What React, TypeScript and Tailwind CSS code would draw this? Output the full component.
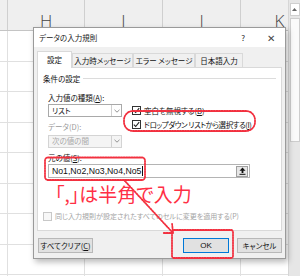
import React from "react";

const jp = "font-['Noto_Sans_CJK_JP',sans-serif] [font-feature-settings:'palt']";

const cols = ["H", "I", "J", "K"];
const rows = [0, 1, 2, 3, 4, 5, 6, 7, 8];

function Check({ on, disabled }: { on?: boolean; disabled?: boolean }) {
  return (
    <span
      className={`flex h-[9px] w-[9px] shrink-0 items-center justify-center border ${
        disabled ? "border-[#c8c8c8] bg-[#f7f7f7]" : "border-[#333] bg-white"
      }`}
    >
      {on && (
        <svg width="7" height="7" viewBox="0 0 7 7">
          <path d="M0.8 3.6 L2.7 5.5 L6.2 1.2" fill="none" stroke="#222" strokeWidth="1.1" />
        </svg>
      )}
    </span>
  );
}

function Select({ value, disabled }: { value: string; disabled?: boolean }) {
  return (
    <div
      className={`flex h-[13px] w-[74px] border ${
        disabled ? "border-[#d4d4d4] bg-[#f4f4f4] text-[#a8a8a8]" : "border-[#a9a9a9] bg-white text-[#111]"
      }`}
    >
      <span className="flex flex-1 items-center pl-[3px] text-[7.5px] leading-none">{value}</span>
      <span className="flex w-[10px] items-center justify-center border-l border-[#d0d0d0]">
        <svg width="6" height="4" viewBox="0 0 6 4">
          <path d="M0.5 0.8 L3 3.2 L5.5 0.8" fill="none" stroke="#888" strokeWidth="0.9" />
        </svg>
      </span>
    </div>
  );
}

function Tab({ label, w, active }: { label: string; w: string; active?: boolean }) {
  return (
    <div
      className={`${w} flex items-center justify-center border border-[#d9d9d9] text-[7.5px] leading-none text-[#111] ${
        active ? "relative z-10 -mb-px h-[17px] border-b-0 bg-white" : "h-[14px] border-b-0 bg-[#f0f0f0]"
      }`}
    >
      {label}
    </div>
  );
}

function Dialog() {
  return (
    <div
      className={`${jp} absolute left-[33px] top-[27px] flex h-[232px] w-[253px] flex-col border border-[#9a9a9a] bg-[#f0f0f0] shadow-[2px_3px_6px_rgba(0,0,0,0.28)]`}
    >
      {/* title bar */}
      <div className="flex h-[19px] shrink-0 items-center bg-white pl-[5px] pr-[10px] text-[7.5px] text-[#222]">
        <span>データの入力規則</span>
        <span className="ml-auto mr-[22px] text-[8px]">?</span>
        <span className="text-[10px] font-light text-[#444]">✕</span>
      </div>

      <div className="flex flex-1 flex-col px-[3px] pt-[4px]">
        <div className="flex items-end">
          <Tab label="設定" w="w-[35px]" active />
          <Tab label="入力時メッセージ" w="w-[61px]" />
          <Tab label="エラー メッセージ" w="w-[62px]" />
          <Tab label="日本語入力" w="w-[48px]" />
        </div>

        {/* panel */}
        <div className="flex h-[164px] flex-col border border-[#d9d9d9] bg-white px-[5px] pt-[7px] text-[7.5px] leading-none text-[#111]">
          <div className="flex items-center gap-[3px]">
            <span>条件の設定</span>
            <span className="flex-1 border-t border-[#dcdcdc]" />
          </div>

          <div className="flex flex-col pl-[5px]">
            <span className="mt-[11px]">入力値の種類(<span className="underline">A</span>):</span>
            <div className="mt-[3px] flex">
              <div className="flex flex-col">
                <Select value="リスト" />
                <span className="mt-[6px] text-[#9a9a9a]">データ(D):</span>
                <div className="mt-[4px]">
                  <Select value="次の値の間" disabled />
                </div>
              </div>
              <div className="ml-[10px] flex flex-col gap-[5px] pt-[2px]">
                <div className="flex items-center gap-[3px]">
                  <Check on />
                  <span>空白を無視する(<span className="underline">B</span>)</span>
                </div>
                <div className="flex items-center gap-[3px]">
                  <Check on />
                  <span className="tracking-[-0.45px]">
                    ドロップダウン&nbsp;リストから選択する(<span className="underline">I</span>)
                  </span>
                </div>
              </div>
            </div>

            <span className="mt-[6px]">元の値(<span className="underline">S</span>):</span>
            <div className="mt-[3px] flex h-[14px] w-[202px] items-center border border-[#b4b4b4] bg-white">
              <span className="flex flex-1 items-center pl-[3px] font-['Liberation_Sans',sans-serif] text-[8.7px] text-[#111]">
                No1,No2,No3,No4,No5
                <span className="ml-[1px] h-[10px] w-px bg-[#111]" />
              </span>
              <span className="mr-px flex h-[11px] w-[12px] items-center justify-center border border-[#a0a0a0] bg-[#e6e6e6]">
                <svg width="7" height="8" viewBox="0 0 7 8">
                  <path d="M3.5 0.5 L6.5 3.8 L4.4 3.8 L4.4 6 L2.6 6 L2.6 3.8 L0.5 3.8 Z" fill="#111" />
                  <rect x="0.5" y="6.8" width="6" height="1" fill="#111" />
                </svg>
              </span>
            </div>
          </div>

          <div className="mt-auto mb-[9px] flex items-center gap-[3px] text-[7px] text-[#a4a4a4]">
            <Check disabled />
            <span>同じ入力規則が設定されたすべてのセルに変更を適用する(P)</span>
          </div>
        </div>

        {/* buttons */}
        <div className="mt-[7px] flex items-center text-[7.5px] leading-none text-[#111]">
          <button className="ml-px flex h-[15px] w-[55px] items-center justify-center border border-[#b8b8b8] bg-[#e1e1e1]">
            すべてクリア(<span className="underline">C</span>)
          </button>
          <button className="ml-auto flex h-[15px] w-[46px] items-center justify-center border border-[#0078d7] bg-[#e1e1e1] font-['Liberation_Sans',sans-serif] text-[8px]">
            OK
          </button>
          <button className="ml-[8px] flex h-[15px] w-[45px] items-center justify-center border border-[#b8b8b8] bg-[#e1e1e1]">
            キャンセル
          </button>
        </div>
      </div>
    </div>
  );
}

function Annotations() {
  const red = "#f2303f";
  return (
    <>
      <svg className="pointer-events-none absolute left-0 top-0" width="300" height="276" viewBox="0 0 300 276">
        <g fill="none" stroke={red} strokeWidth="1.8" strokeDasharray="1.4 1.2" strokeLinecap="round">
          <rect x="124" y="111" width="131" height="20" rx="9" />
          <rect x="45" y="157.5" width="100" height="22.5" rx="3" />
          <rect x="172" y="230" width="61" height="28" rx="2" />
          <path d="M124 180 L173 233" />
          <path d="M173 233 L172 223 M173 233 L163 233" />
        </g>
      </svg>
      <div className={`${jp} pointer-events-none absolute left-[55px] top-[184px] text-[19px] leading-none text-[#ff2f45]`}>
        「,」は半角で入力
      </div>
    </>
  );
}

export default function App() {
  return (
    <div className="relative flex h-[276px] w-[300px] overflow-hidden bg-white">
      {/* sheet */}
      <div className="flex w-[288px] flex-col">
        <div className="flex h-[31px] shrink-0 border-b border-[#c4c4c4] bg-[#efefef]">
          <div className="w-[8px] shrink-0 border-r border-[#cfcfcf]" />
          {cols.map((c) => (
            <div
              key={c}
              className={`${c === "H" ? "w-[77px]" : "w-[78px]"} flex shrink-0 items-end justify-center border-r border-[#cfcfcf] pb-px font-['Open_Sans',sans-serif] text-[17px] font-light leading-none text-[#444]`}
            >
              {c}
            </div>
          ))}
        </div>
        {rows.map((r) => (
          <div key={r} className="flex h-[30.5px] shrink-0 border-b border-[#e0e0e0]">
            <div className="w-[8px] shrink-0 border-r border-[#e0e0e0]" />
            {cols.map((c) => (
              <div key={c} className={`${c === "H" ? "w-[77px]" : "w-[78px]"} shrink-0 border-r border-[#e0e0e0]`} />
            ))}
          </div>
        ))}
      </div>

      {/* scrollbar */}
      <div className="flex w-[12px] flex-col items-center border-l border-[#d6d6d6] bg-[#e6e6e6] pt-[3px]">
        <div className="flex h-[13px] w-[10px] items-center justify-center border border-[#cfcfcf] bg-white">
          <svg width="5" height="3" viewBox="0 0 5 3">
            <path d="M0 3 L2.5 0 L5 3 Z" fill="#666" />
          </svg>
        </div>
        <div className="mt-[2px] h-[124px] w-[10px] border border-[#cdcdcd] bg-[#fafafa]" />
      </div>

      <Dialog />
      <Annotations />
    </div>
  );
}
